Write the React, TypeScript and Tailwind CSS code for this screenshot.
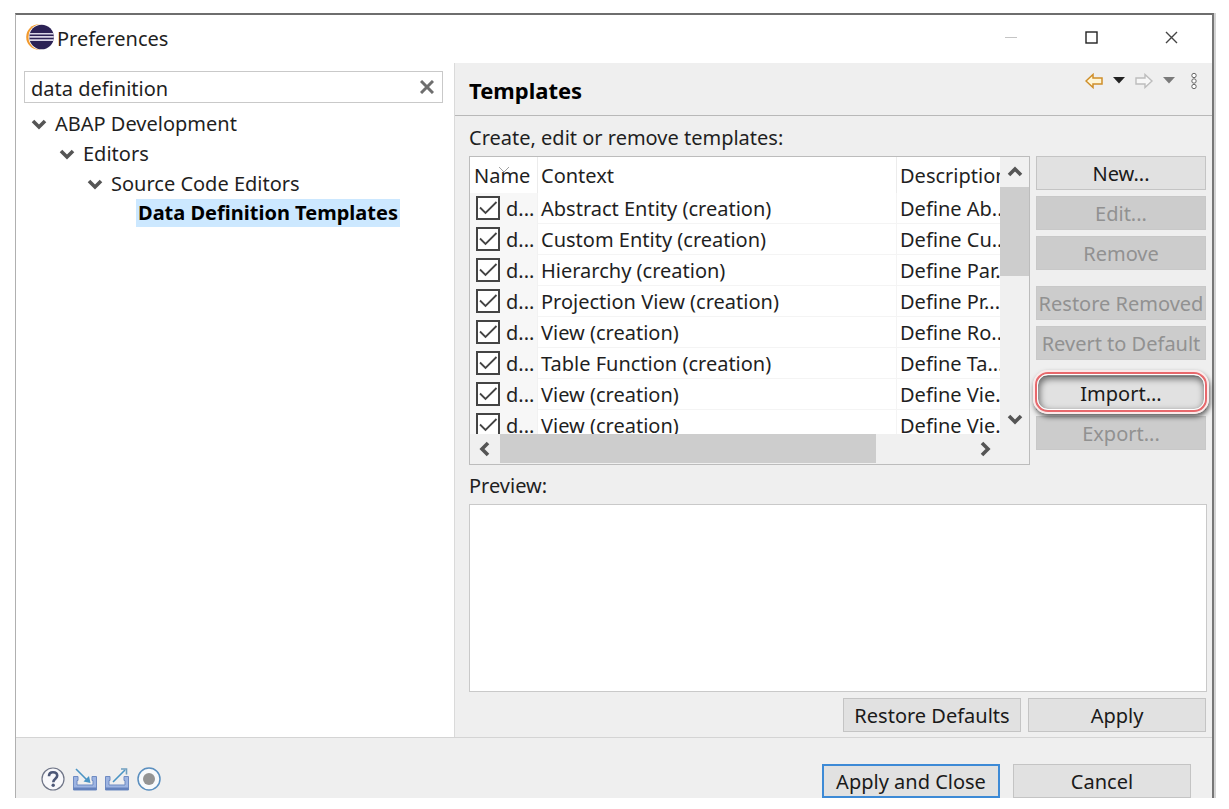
import { useState } from "react";

const treeItems = [
  { label: "ABAP Development", indent: "pl-[15px]" },
  { label: "Editors", indent: "pl-[43px]" },
  { label: "Source Code Editors", indent: "pl-[71px]" },
];

const initialTemplates = [
  { id: 1, context: "Abstract Entity (creation)", description: "Define Ab...", enabled: true },
  { id: 2, context: "Custom Entity (creation)", description: "Define Cu...", enabled: true },
  { id: 3, context: "Hierarchy (creation)", description: "Define Par...", enabled: true },
  { id: 4, context: "Projection View (creation)", description: "Define Pr...", enabled: true },
  { id: 5, context: "View (creation)", description: "Define Ro...", enabled: true },
  { id: 6, context: "Table Function (creation)", description: "Define Ta...", enabled: true },
  { id: 7, context: "View (creation)", description: "Define Vie...", enabled: true },
  { id: 8, context: "View (creation)", description: "Define Vie...", enabled: true },
];

type Direction = "up" | "down" | "left" | "right";

const chevrons: Record<Direction, string> = {
  up: "M2 11 L8 5 L14 11",
  down: "M2 5 L8 11 L14 5",
  left: "M11 2 L5 8 L11 14",
  right: "M5 2 L11 8 L5 14",
};

function Chevron({ direction }: { direction: Direction }) {
  return (
    <svg viewBox="0 0 16 16" className="size-4 shrink-0" fill="none" stroke="#555" strokeWidth="3.6">
      <path d={chevrons[direction]} />
    </svg>
  );
}

function Button({
  label,
  disabled = false,
  primary = false,
  width = "w-[178px]",
}: {
  label: string;
  disabled?: boolean;
  primary?: boolean;
  width?: string;
}) {
  let colors = "border border-[#c4c4c4] bg-[#e1e1e1] text-[#1a1a1a]";
  if (disabled) colors = "border border-[#c8c8c8] bg-[#cccccc] text-[#919191]";
  if (primary) colors = "border-2 border-[#3d8ad6] bg-[#e1e1e1] text-[#1a1a1a]";
  return (
    <button
      type="button"
      disabled={disabled}
      className={`flex h-[34px] items-center justify-center pt-[2px] whitespace-nowrap ${width} ${colors}`}
    >
      {label}
    </button>
  );
}

function EclipseLogo() {
  return (
    <svg viewBox="0 0 28 26" className="h-[26px] w-7">
      <circle cx="13" cy="13" r="12.8" fill="#f29a2e" />
      <circle cx="15.5" cy="13" r="13" fill="#fff" />
      <circle cx="15.6" cy="13" r="12.3" fill="#2c2255" />
      <path d="M3.6 9.7h24M3.2 12.9h24.6M3.6 16.1h24" stroke="#d9d6e6" strokeWidth="1.6" />
    </svg>
  );
}

function TitleBar() {
  return (
    <header className="flex h-12 items-center bg-white pb-1 pl-[10px]">
      <EclipseLogo />
      <h1 className="ml-[3px] flex-1 pt-1">Preferences</h1>
      <button type="button" aria-label="Minimize" className="flex h-full w-20 items-center justify-center">
        <svg viewBox="0 0 14 14" className="size-[14px]" stroke="#c4c4c4">
          <path d="M0 7.5h12" />
        </svg>
      </button>
      <button type="button" aria-label="Maximize" className="flex h-full w-20 items-center justify-center">
        <svg viewBox="0 0 14 14" className="size-[14px]" fill="none" stroke="#222" strokeWidth="1.4">
          <rect x="1" y="2" width="11" height="11" />
        </svg>
      </button>
      <button type="button" aria-label="Close" className="flex h-full w-20 items-center justify-center">
        <svg viewBox="0 0 14 14" className="size-[14px]" stroke="#444" strokeWidth="1.4">
          <path d="M1 2 L12 13 M12 2 L1 13" />
        </svg>
      </button>
    </header>
  );
}

function Sidebar() {
  const [filter, setFilter] = useState("data definition");
  return (
    <aside className="w-[438px] shrink-0 bg-white pt-2 pr-[11px] pl-2">
      <div className="flex h-8 items-center border border-[#c9c9c9] bg-white">
        <input
          type="text"
          aria-label="Filter preferences"
          value={filter}
          onChange={(e) => setFilter(e.target.value)}
          className="h-full min-w-0 flex-1 px-[6px] pt-[2px] outline-none"
        />
        <button type="button" aria-label="Clear" onClick={() => setFilter("")} className="px-2">
          <svg viewBox="0 0 14 14" className="size-[14px]" stroke="#6e6e6e" strokeWidth="3">
            <path d="M1 1 L13 13 M13 1 L1 13" />
          </svg>
        </button>
      </div>
      <ul className="pt-[6px]">
        {treeItems.map((item) => (
          <li key={item.label} className={`-ml-2 flex h-[30px] items-center gap-2 ${item.indent}`}>
            <Chevron direction="down" />
            {item.label}
          </li>
        ))}
        <li className="ml-[112px] flex h-[30px] pb-[2px]">
          <a href="#data-definition" className="flex items-center bg-[#cce8ff] px-[2px] font-bold text-black">
            Data Definition Templates
          </a>
        </li>
      </ul>
    </aside>
  );
}

function NavToolbar() {
  return (
    <div className="flex h-9 items-center pr-[15px]">
      <button type="button" aria-label="Back">
        <svg viewBox="0 0 18 16" className="h-4 w-[18px]" fill="#fff6d6" stroke="#cf8f2a" strokeWidth="1.5">
          <path d="M1 8 L8 1.5 V5 H17 V11 H8 V14.5 Z" />
        </svg>
      </button>
      <button type="button" aria-label="Back history" className="ml-[10px]">
        <svg viewBox="0 0 12 16" className="h-4 w-3" fill="#222">
          <path d="M0 4 H12 L6 10.5 Z" />
        </svg>
      </button>
      <button type="button" aria-label="Forward" className="ml-[10px]">
        <svg viewBox="0 0 18 16" className="h-4 w-[18px]" fill="#f7f7f7" stroke="#bdbdbd" strokeWidth="1.4">
          <path d="M17 8 L10 1.5 V5 H1 V11 H10 V14.5 Z" />
        </svg>
      </button>
      <button type="button" aria-label="Forward history" className="ml-[10px]">
        <svg viewBox="0 0 12 16" className="h-4 w-3" fill="#7a7a7a">
          <path d="M0 4 H12 L6 10.5 Z" />
        </svg>
      </button>
      <button type="button" aria-label="Menu" className="ml-4">
        <svg viewBox="0 0 6 18" className="h-[18px] w-[6px]" fill="#fff" stroke="#666">
          <circle cx="3" cy="3.5" r="2.2" />
          <circle cx="3" cy="9" r="2.2" />
          <circle cx="3" cy="14.5" r="2.2" />
        </svg>
      </button>
    </div>
  );
}

function TemplateTable() {
  const [templates, setTemplates] = useState(initialTemplates);

  const toggle = (id: number) => {
    setTemplates(templates.map((t) => (t.id === id ? { ...t, enabled: !t.enabled } : t)));
  };

  return (
    <div className="min-w-0 flex-1 border border-[#bcbcbc] bg-[#f0f0f0]">
      <div className="flex h-[277px]">
        <div className="min-w-0 flex-1 overflow-hidden bg-white">
          <table className="w-full table-fixed border-separate border-spacing-0">
            <thead>
              <tr className="h-9 text-left">
                <th className="relative w-[68px] border-r border-[#ececec] p-0 pt-[2px] pl-1 font-normal">
                  Name
                  <svg
                    viewBox="0 0 12 7"
                    className="absolute top-[9px] left-7 h-[7px] w-3"
                    fill="none"
                    stroke="#a0a0a0"
                  >
                    <path d="M1 1 L6 6 L11 1" />
                  </svg>
                </th>
                <th className="border-r border-[#ececec] p-0 pt-[2px] pl-[3px] font-normal">Context</th>
                <th className="w-[103px] overflow-hidden p-0 pt-[2px] pl-[3px] font-normal whitespace-nowrap">
                  Description
                </th>
              </tr>
            </thead>
            <tbody>
              {templates.map((t) => (
                <tr key={t.id} className="h-[31px]">
                  <td className="border-r border-[#f2f2f2] bg-[#f7f7f7] p-0 pl-[6px]">
                    <label className="flex h-[31px] items-center gap-[6px]">
                      <span className="relative mb-[2px] size-6 shrink-0">
                        <input
                          type="checkbox"
                          checked={t.enabled}
                          onChange={() => toggle(t.id)}
                          className="peer block size-6 appearance-none border-2 border-[#444] bg-white"
                        />
                        <svg
                          viewBox="0 0 24 24"
                          className="pointer-events-none absolute inset-0 hidden size-6 peer-checked:block"
                          fill="none"
                          stroke="#444"
                          strokeWidth="1.8"
                        >
                          <path d="M4 11.500 L9.500 17 L20.500 6" />
                        </svg>
                      </span>
                      d...
                    </label>
                  </td>
                  <td className="overflow-hidden border-r border-b border-[#f4f4f4] p-0 pt-[2px] pl-[3px] whitespace-nowrap">
                    {t.context}
                  </td>
                  <td className="overflow-hidden border-b border-[#f4f4f4] p-0 pt-[2px] pl-[3px] whitespace-nowrap">
                    {t.description}
                  </td>
                </tr>
              ))}
            </tbody>
          </table>
        </div>
        <div className="flex w-[29px] shrink-0 flex-col items-center">
          <button type="button" aria-label="Scroll up" className="flex h-[30px] items-center">
            <Chevron direction="up" />
          </button>
          <div className="h-[89px] w-full bg-[#cdcdcd]" />
          <div className="flex-1" />
          <button type="button" aria-label="Scroll down" className="flex h-[30px] items-center">
            <Chevron direction="down" />
          </button>
        </div>
      </div>
      <div className="flex h-[30px] items-center pr-[29px] pb-px">
        <button type="button" aria-label="Scroll left" className="flex w-[30px] justify-center">
          <Chevron direction="left" />
        </button>
        <div className="h-full w-[376px] bg-[#cdcdcd]" />
        <div className="flex-1" />
        <button type="button" aria-label="Scroll right" className="flex w-[30px] justify-center">
          <Chevron direction="right" />
        </button>
      </div>
    </div>
  );
}

function TemplateActions() {
  return (
    <div className="flex w-[170px] shrink-0 flex-col gap-4">
      <div className="flex flex-col gap-[6px]">
        <Button label="New..." width="w-full" />
        <Button label="Edit..." width="w-full" disabled />
        <Button label="Remove" width="w-full" disabled />
      </div>
      <div className="flex flex-col gap-[6px]">
        <Button label="Restore Removed" width="w-full" disabled />
        <Button label="Revert to Default" width="w-full" disabled />
      </div>
      <div className="flex flex-col gap-[6px]">
        <div className="relative z-10">
          <Button label="Import..." width="w-full" />
          {/* red callout ring around the import button */}
          <div className="pointer-events-none absolute -inset-x-[3px] -top-[6px] -bottom-1 rounded-[15px] border-2 border-[#fbeaea] shadow-[1px_3px_5px_rgba(0,0,0,0.6)]">
            <div className="h-full rounded-[13px] border-2 border-[#e8686c]">
              <div className="h-full rounded-[11px] border border-white shadow-[inset_1px_3px_6px_1px_rgba(0,0,0,0.5)]" />
            </div>
          </div>
        </div>
        <Button label="Export..." width="w-full" disabled />
      </div>
    </div>
  );
}

function TemplatesPage() {
  return (
    <main className="flex min-w-0 flex-1 flex-col border-l border-[#dadada] bg-[#efefef]">
      <div className="flex h-[53px] justify-between border-b border-[#b8b8b8] pl-[14px]">
        <h2 className="self-center pt-[2px] text-[22px] font-bold text-black">Templates</h2>
        <NavToolbar />
      </div>
      <div className="flex flex-col pr-[5px] pb-[5px] pl-[14px]">
        <p className="pt-2 pb-1">Create, edit or remove templates:</p>
        <div className="flex gap-[6px] pr-px">
          <TemplateTable />
          <TemplateActions />
        </div>
        <label htmlFor="preview" className="pt-[7px] pb-1">
          Preview:
        </label>
        <textarea
          id="preview"
          readOnly
          className="block h-[188px] w-full resize-none border border-[#c9c9c9] bg-white outline-none"
        />
        <div className="mt-[6px] flex justify-end gap-[7px] pr-px">
          <Button label="Restore Defaults" />
          <Button label="Apply" />
        </div>
      </div>
    </main>
  );
}

function FooterIcons() {
  return (
    <div className="flex items-center gap-2">
      <button type="button" aria-label="Help">
        <svg viewBox="0 0 24 24" className="size-6" fill="none">
          <circle cx="12" cy="12" r="11" fill="#f8f8fb" stroke="#6f7587" strokeWidth="1.2" />
          <path
            d="M8 9.200C8 6.800 9.700 5.300 12 5.300s4.200 1.300 4.200 3.500c0 2.900-3.900 3-3.900 6.400"
            stroke="#4d5878"
            strokeWidth="2.600"
          />
          <circle cx="12.200" cy="18.300" r="1.700" fill="#4d5878" />
        </svg>
      </button>
      <button type="button" aria-label="Import preferences">
        <svg viewBox="0 0 24 24" className="size-6" fill="none">
          <path d="M0.500 9.500h4.500v4H4v4.500h16v-4.500h-1v-4h4.500v13.500H0.500z" fill="#9db4e2" stroke="#6f8bc2" />
          <path d="M0.500 20.500h23v2.500H0.500z" fill="#6482bd" />
          <path d="M3 2L15 14" stroke="#4a94c4" strokeWidth="1.600" />
          <path d="M17.500 16L10.500 14.500L16 9z" fill="#4a94c4" />
        </svg>
      </button>
      <button type="button" aria-label="Export preferences">
        <svg viewBox="0 0 24 24" className="size-6" fill="none">
          <path d="M0.500 9.500h4.500v4H4v4.500h16v-4.500h-1v-4h4.500v13.500H0.500z" fill="#9db4e2" stroke="#6f8bc2" />
          <path d="M0.500 20.500h23v2.500H0.500z" fill="#6482bd" />
          <path d="M8 15L20 3" stroke="#4a94c4" strokeWidth="1.600" />
          <path d="M16 2H21.500V7.500" stroke="#6f9fc0" strokeWidth="1.600" />
        </svg>
      </button>
      <button type="button" aria-label="Record preferences">
        <svg viewBox="0 0 24 24" className="size-6" fill="none">
          <circle cx="12" cy="12" r="11" fill="#f8fafc" stroke="#5b8fbf" strokeWidth="1.500" />
          <circle cx="12" cy="12" r="6" fill="#949494" />
        </svg>
      </button>
    </div>
  );
}

function App() {
  return (
    <div className="bg-white pt-[13px] pr-[13px] pb-[11px] pl-[15px] font-['Noto_Sans','Open_Sans',sans-serif] text-[20px] leading-7 text-[#1f1f1f]">
      <div className="border-r-2 border-[#d4d4d4]">
        <div className="flex flex-col border-t-2 border-r-2 border-l border-t-[#6e6e6e] border-r-[#777] border-l-[#b0b0b0]">
          <TitleBar />
          <div className="flex">
            <Sidebar />
            <TemplatesPage />
          </div>
          <footer className="flex items-start justify-between border-t border-[#d4d4d4] bg-[#efefef] pr-[21px] pl-[25px]">
            <div className="pt-[29px]">
              <FooterIcons />
            </div>
            <div className="flex gap-[13px] pt-[26px]">
              <Button label="Apply and Close" primary />
              <Button label="Cancel" />
            </div>
          </footer>
        </div>
      </div>
    </div>
  );
}

export default App;
